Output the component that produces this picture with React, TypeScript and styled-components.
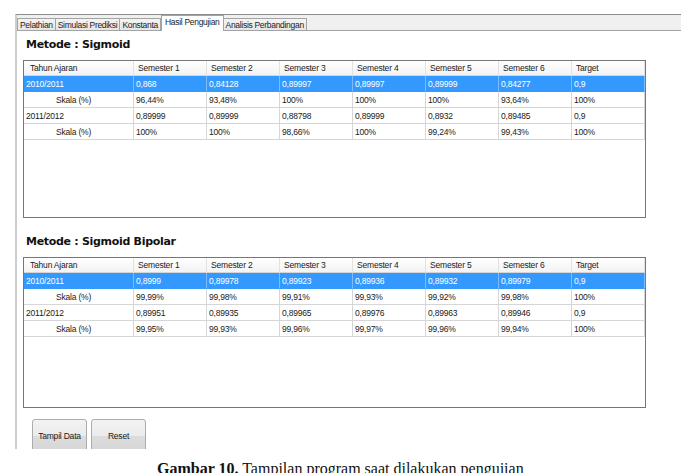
import React from "react";
import styled, { createGlobalStyle } from "styled-components";

const GlobalStyle = createGlobalStyle`
  html, body {
    margin: 0;
    padding: 0;
    background: #ffffff;
    overflow: hidden;
  }
  body {
    width: 681px;
    height: 473px;
    font-family: "Liberation Sans", Arial, sans-serif;
  }
  * { box-sizing: border-box; }
`;

const Page = styled.div`
  width: 681px;
  height: 473px;
  overflow: hidden;
  display: flex;
  flex-direction: column;
`;

const Frame = styled.div`
  margin: 14px 0 0 15px;
  border-top: 1px solid #8c8c8c;
  border-left: 2px solid #cdcdcd;
  display: flex;
  flex-direction: column;
`;

const TabStrip = styled.div`
  height: 16px;
  display: flex;
  align-items: flex-end;
  background: #f0f0f0;
  border-bottom: 1px solid #a3a3a3;
`;

const Tab = styled.div<{ $active?: boolean }>`
  height: ${(p) => (p.$active ? "16px" : "12px")};
  margin-bottom: ${(p) => (p.$active ? "-1px" : "0")};
  padding: ${(p) => (p.$active ? "1px 3px 0" : "0 2px")};
  border: 1px solid #a3a3a3;
  border-bottom: none;
  border-left: ${(p) => (p.$active ? "1px solid #a3a3a3" : "none")};
  background: ${(p) =>
    p.$active ? "#ffffff" : "linear-gradient(#f4f4f4, #e6e6e6)"};
  font-size: 8.5px;
  letter-spacing: -0.3px;
  line-height: 10px;
  color: #222;
  white-space: nowrap;
  display: flex;
  align-items: ${(p) => (p.$active ? "flex-start" : "center")};
  position: relative;
  z-index: ${(p) => (p.$active ? 1 : 0)};
  &:first-child {
    border-left: 1px solid #a3a3a3;
  }
`;

const Panel = styled.div`
  padding: 7px 0 0 6px;
  display: flex;
  flex-direction: column;
`;

const Heading = styled.div<{ $gap: number }>`
  margin-top: ${(p) => p.$gap}px;
  padding-left: 3px;
  height: 14px;
  font-family: "DejaVu Sans", Verdana, sans-serif;
  font-weight: bold;
  font-size: 11px;
  letter-spacing: -0.3px;
  line-height: 14px;
  color: #111;
`;

const Grid = styled.div<{ $height: number }>`
  margin-top: 8px;
  width: 623px;
  height: ${(p) => p.$height}px;
  border: 1px solid #767676;
  background: #ffffff;
  display: grid;
  grid-template-columns: 110px repeat(6, 73px) 1fr;
  grid-auto-rows: 16px;
  grid-template-rows: 15px;
  align-content: start;
  font-size: 8.5px;
  letter-spacing: -0.2px;
  color: #1a1a1a;
`;

const HeadCell = styled.div<{ $first?: boolean }>`
  padding-left: ${(p) => (p.$first ? "6px" : "4px")};
  border-right: 1px solid #e2e2e2;
  border-bottom: 1px solid #d5d5d5;
  background: linear-gradient(#ffffff, #f3f3f3);
  display: flex;
  align-items: center;
  white-space: nowrap;
`;

const Cell = styled.div<{ $selected?: boolean; $indent?: boolean }>`
  padding-left: ${(p) => (p.$indent ? "32px" : "2px")};
  border-right: 1px solid
    ${(p) => (p.$selected ? "rgba(255,255,255,0.35)" : "#d6d6d6")};
  border-bottom: 1px solid
    ${(p) => (p.$selected ? "#3399ff" : "#d6d6d6")};
  background: ${(p) => (p.$selected ? "#3399ff" : "#ffffff")};
  color: ${(p) => (p.$selected ? "#ffffff" : "#1a1a1a")};
  display: flex;
  align-items: center;
  white-space: nowrap;
`;

const ButtonBar = styled.div`
  margin-top: 11px;
  padding-left: 9px;
  height: 30px;
  overflow: hidden;
  display: flex;
  gap: 4px;
`;

const Button = styled.div`
  width: 55px;
  height: 34px;
  border: 1px solid #acacac;
  border-radius: 3px;
  background: linear-gradient(#f3f3f3 0%, #ebebeb 50%, #dcdcdc 51%, #d6d6d6 100%);
  font-size: 8.5px;
  letter-spacing: -0.2px;
  color: #1a1a1a;
  display: flex;
  align-items: center;
  justify-content: center;
`;

const Caption = styled.div`
  margin-top: 12px;
  padding-left: 157px;
  font-family: "Liberation Serif", "Times New Roman", serif;
  font-size: 16px;
  line-height: 16px;
  color: #111;
  white-space: nowrap;
`;

const Bold = styled.span`
  font-weight: bold;
`;

type Row = { label: string; values: string[]; selected?: boolean; sub?: boolean };

const headers = [
  "Tahun Ajaran",
  "Semester 1",
  "Semester 2",
  "Semester 3",
  "Semester 4",
  "Semester 5",
  "Semester 6",
  "Target",
];

const sigmoid: Row[] = [
  {
    label: "2010/2011",
    values: ["0,868", "0,84128", "0,89997", "0,89997", "0,89999", "0,84277", "0,9"],
    selected: true,
  },
  {
    label: "Skala (%)",
    sub: true,
    values: ["96,44%", "93,48%", "100%", "100%", "100%", "93,64%", "100%"],
  },
  {
    label: "2011/2012",
    values: ["0,89999", "0,89999", "0,88798", "0,89999", "0,8932", "0,89485", "0,9"],
  },
  {
    label: "Skala (%)",
    sub: true,
    values: ["100%", "100%", "98,66%", "100%", "99,24%", "99,43%", "100%"],
  },
];

const bipolar: Row[] = [
  {
    label: "2010/2011",
    values: ["0,8999", "0,89978", "0,89923", "0,89936", "0,89932", "0,89979", "0,9"],
    selected: true,
  },
  {
    label: "Skala (%)",
    sub: true,
    values: ["99,99%", "99,98%", "99,91%", "99,93%", "99,92%", "99,98%", "100%"],
  },
  {
    label: "2011/2012",
    values: ["0,89951", "0,89935", "0,89965", "0,89976", "0,89963", "0,89946", "0,9"],
  },
  {
    label: "Skala (%)",
    sub: true,
    values: ["99,95%", "99,93%", "99,96%", "99,97%", "99,96%", "99,94%", "100%"],
  },
];

function DataGrid({ rows, height }: { rows: Row[]; height: number }) {
  return (
    <Grid $height={height}>
      {headers.map((h, i) => (
        <HeadCell key={h} $first={i === 0}>
          {h}
        </HeadCell>
      ))}
      {rows.map((r, ri) => (
        <React.Fragment key={ri}>
          <Cell $selected={r.selected} $indent={r.sub}>
            {r.label}
          </Cell>
          {r.values.map((v, vi) => (
            <Cell key={vi} $selected={r.selected}>
              {v}
            </Cell>
          ))}
        </React.Fragment>
      ))}
    </Grid>
  );
}

const tabs = [
  "Pelathian",
  "Simulasi Prediksi",
  "Konstanta",
  "Hasil Pengujian",
  "Analisis Perbandingan",
];

export default function App() {
  return (
    <Page>
      <GlobalStyle />
      <Frame>
        <TabStrip>
          {tabs.map((t) => (
            <Tab key={t} $active={t === "Hasil Pengujian"}>
              {t}
            </Tab>
          ))}
        </TabStrip>
        <Panel>
          <Heading $gap={0}>Metode : Sigmoid</Heading>
          <DataGrid rows={sigmoid} height={158} />
          <Heading $gap={17}>Metode : Sigmoid Bipolar</Heading>
          <DataGrid rows={bipolar} height={151} />
          <ButtonBar>
            <Button>Tampil Data</Button>
            <Button>Reset</Button>
          </ButtonBar>
        </Panel>
      </Frame>
      <Caption>
        <Bold>Gambar 10.</Bold> Tampilan program saat dilakukan pengujian
      </Caption>
    </Page>
  );
}
